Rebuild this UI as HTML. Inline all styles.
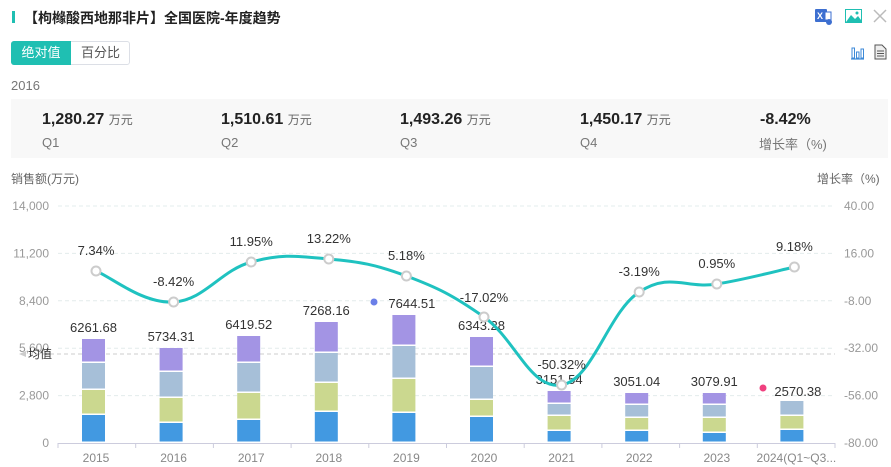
<!DOCTYPE html>
<html><head><meta charset="utf-8"><style>
*{margin:0;padding:0;box-sizing:border-box}
body{width:891px;height:467px;background:#fff;font-family:"Liberation Sans","Noto Sans CJK SC",sans-serif;position:relative;overflow:hidden;color:#333}
.abs{position:absolute;white-space:nowrap}
</style></head><body>
<div class="abs" style="left:12px;top:11px;width:3px;height:12px;background:#1fbfb2"></div>
<div class="abs" style="left:24px;top:8px;font-size:14px;font-weight:bold;color:#222">【枸橼酸西地那非片】全国医院-年度趋势</div>
<svg class="abs" style="left:814px;top:8px" width="20" height="18" viewBox="0 0 20 18"><rect x="1" y="1" width="12" height="13" rx="1" fill="#3d6fd0"/><text x="3" y="11" font-size="9" fill="#fff" font-family="Liberation Sans" font-weight="bold">X</text><rect x="11" y="4" width="6" height="8" fill="#fff" stroke="#3d6fd0"/><circle cx="15" cy="14" r="3" fill="#3d6fd0"/></svg>
<svg class="abs" style="left:845px;top:9px" width="17" height="14" viewBox="0 0 17 14"><rect x="0.5" y="0.5" width="16" height="13" fill="#fff" stroke="#1fbfb2"/><path d="M1 13 L6 6 L10 10 L13 7 L16 11 V13Z" fill="#1fbfb2"/><circle cx="12" cy="4" r="1.5" fill="#1fbfb2"/></svg>
<svg class="abs" style="left:873px;top:9px" width="14" height="14"><path d="M1 1L13 13M13 1L1 13" stroke="#bbb" stroke-width="1.5"/></svg>
<svg class="abs" style="left:850px;top:45px" width="15" height="15"><path d="M1 14H14" stroke="#3d8ad8" stroke-width="1.2"/><rect x="2" y="3" width="2.5" height="10" fill="none" stroke="#3d8ad8"/><rect x="6.5" y="7" width="2.5" height="6" fill="none" stroke="#3d8ad8"/><rect x="11" y="4" width="2.5" height="9" fill="none" stroke="#3d8ad8"/></svg>
<svg class="abs" style="left:874px;top:44px" width="13" height="16"><path d="M1 1H8L12 5V15H1Z" fill="#eee" stroke="#555"/><path d="M3 7H10M3 9.5H10M3 12H10" stroke="#555"/></svg>
<div class="abs" style="left:11px;top:41px;width:119px;height:24px;border:1px solid #dcdfe6;border-radius:3px"></div>
<div class="abs" style="left:11px;top:41px;width:60px;height:24px;background:#1fbfb2;border-radius:3px 0 0 3px;color:#fff;font-size:13px;line-height:24px;text-align:center">绝对值</div>
<div class="abs" style="left:71px;top:41px;width:59px;height:24px;color:#555;font-size:13px;line-height:24px;text-align:center">百分比</div>
<div class="abs" style="left:11px;top:78px;font-size:13px;color:#777">2016</div>
<div class="abs" style="left:11px;top:99px;width:877px;height:59px;background:#f8f8f8"></div>
<div class="abs" style="left:42px;top:111px;font-size:16px;font-weight:bold;color:#222">1,280.27 <span style="font-size:12px;font-weight:normal;color:#666">万元</span></div>
<div class="abs" style="left:42px;top:135px;font-size:13px;color:#777">Q1</div>
<div class="abs" style="left:221px;top:111px;font-size:16px;font-weight:bold;color:#222">1,510.61 <span style="font-size:12px;font-weight:normal;color:#666">万元</span></div>
<div class="abs" style="left:221px;top:135px;font-size:13px;color:#777">Q2</div>
<div class="abs" style="left:400px;top:111px;font-size:16px;font-weight:bold;color:#222">1,493.26 <span style="font-size:12px;font-weight:normal;color:#666">万元</span></div>
<div class="abs" style="left:400px;top:135px;font-size:13px;color:#777">Q3</div>
<div class="abs" style="left:580px;top:111px;font-size:16px;font-weight:bold;color:#222">1,450.17 <span style="font-size:12px;font-weight:normal;color:#666">万元</span></div>
<div class="abs" style="left:580px;top:135px;font-size:13px;color:#777">Q4</div>
<div class="abs" style="left:760px;top:111px;font-size:16px;font-weight:bold;color:#222">-8.42%</div>
<div class="abs" style="left:759px;top:134px;font-size:13px;color:#777">增长率（%)</div>
<svg id="c" class="abs" style="left:0;top:0" width="891" height="467" font-family="Liberation Sans, Noto Sans CJK SC, sans-serif"></svg>
<script>
(function(){
var s='';
s+='<text x="11" y="183" font-size="12" fill="#666">销售额(万元)</text>';
s+='<text x="817" y="183" font-size="12" fill="#666">增长率（%)</text>';
var L=['14,000','11,200','8,400','5,600','2,800','0'],R=['40.00','16.00','-8.00','-32.00','-56.00','-80.00'];
for(var i=0;i<6;i++){var y=206+i*47.4;
 if(i<5)s+='<line x1="58" x2="835" y1="'+y+'" y2="'+y+'" stroke="#e3ecec" stroke-dasharray="4,3"/>';
 s+='<text x="49" y="'+(y+4)+'" font-size="12" fill="#999" text-anchor="end">'+L[i]+'</text>';
 s+='<text x="844" y="'+(y+4)+'" font-size="12" fill="#999">'+R[i]+'</text>';}
s+='<line x1="58" x2="835" y1="443.5" y2="443.5" stroke="#ccd"/>';
s+='<line x1="22" x2="835" y1="354" y2="354" stroke="#ccc" stroke-dasharray="4,3"/>';
var yrs=['2015','2016','2017','2018','2019','2020','2021','2022','2023','2024(Q1~Q3...'];
for(var i=0;i<=10;i++){var x=58+i*77.7;s+='<line x1="'+x+'" x2="'+x+'" y1="443" y2="448" stroke="#ccd"/>';}
var B=[[415,390,363,339],[423,398,372,348],[420,393,363,336],[412,383,353,322],[413,379,346,315],[417,400,367,337],[431,416,404,391],[431,418,405,393],[433,418,405,393],[430,416,401,null]];
var C=['#4299e1','#cbd88f','#a6bfd8','#a394e4'];
var V=['6261.68','5734.31','6419.52','7268.16','7644.51','6343.28','3151.54','3051.04','3079.91','2570.38'];
for(var i=0;i<10;i++){var cx=93.5+77.6*i,b=B[i],bot=443;
 for(var k=0;k<4;k++){if(b[k]==null)break;var tp=b[k];s+='<rect x="'+(cx-11.5)+'" y="'+tp+'" width="23" height="'+(bot-tp-1.5)+'" fill="'+C[k]+'"/>';bot=tp;}
 var ty=(b[3]==null?b[2]:b[3])-7;var lx=cx;
 if(i==4){lx=cx+8;s+='<circle cx="374" cy="302" r="3.5" fill="#6b7fe8"/>';}
 if(i==9){lx=cx+6;ty=396;s+='<circle cx="763" cy="388" r="3.5" fill="#f0407f"/>';}
 s+='<text x="'+lx+'" y="'+ty+'" font-size="13" fill="#333" text-anchor="middle">'+V[i]+'</text>';
 s+='<text x="'+(96+77.6*i-(i==9?-2:0))+'" y="462" font-size="12" fill="#888" text-anchor="middle">'+yrs[i]+'</text>';}
s+='<path d="M19 354 L26 351 V357Z" fill="#ccc"/><text x="28" y="358" font-size="12" fill="#333">均值</text>';
var P=[271,302,262,259,276,317,385,292,284,267],G=['7.34%','-8.42%','11.95%','13.22%','5.18%','-17.02%','-50.32%','-3.19%','0.95%','9.18%'];
var pts=P.map(function(y,i){return [96+77.6*i,y]});
var d='M'+pts[0][0]+' '+pts[0][1];
for(var i=0;i<9;i++){var p0=pts[Math.max(i-1,0)],p1=pts[i],p2=pts[i+1],p3=pts[Math.min(i+2,9)],t=0.2;
 d+=' C'+(p1[0]+(p2[0]-p0[0])*t)+' '+(p1[1]+(p2[1]-p0[1])*t)+' '+(p2[0]-(p3[0]-p1[0])*t)+' '+(p2[1]-(p3[1]-p1[1])*t)+' '+p2[0]+' '+p2[1];}
s+='<path d="'+d+'" fill="none" stroke="#1fc2c0" stroke-width="3"/>';
for(var i=0;i<10;i++){s+='<circle cx="'+pts[i][0]+'" cy="'+pts[i][1]+'" r="4.5" fill="#fff" stroke="#ccc" stroke-width="2"/>';
 s+='<text x="'+pts[i][0]+'" y="'+(pts[i][1]-(i==5?15:16))+'" font-size="13" fill="#333" text-anchor="middle">'+G[i]+'</text>';}
document.getElementById('c').innerHTML=s;
})();
</script>
</body></html>
